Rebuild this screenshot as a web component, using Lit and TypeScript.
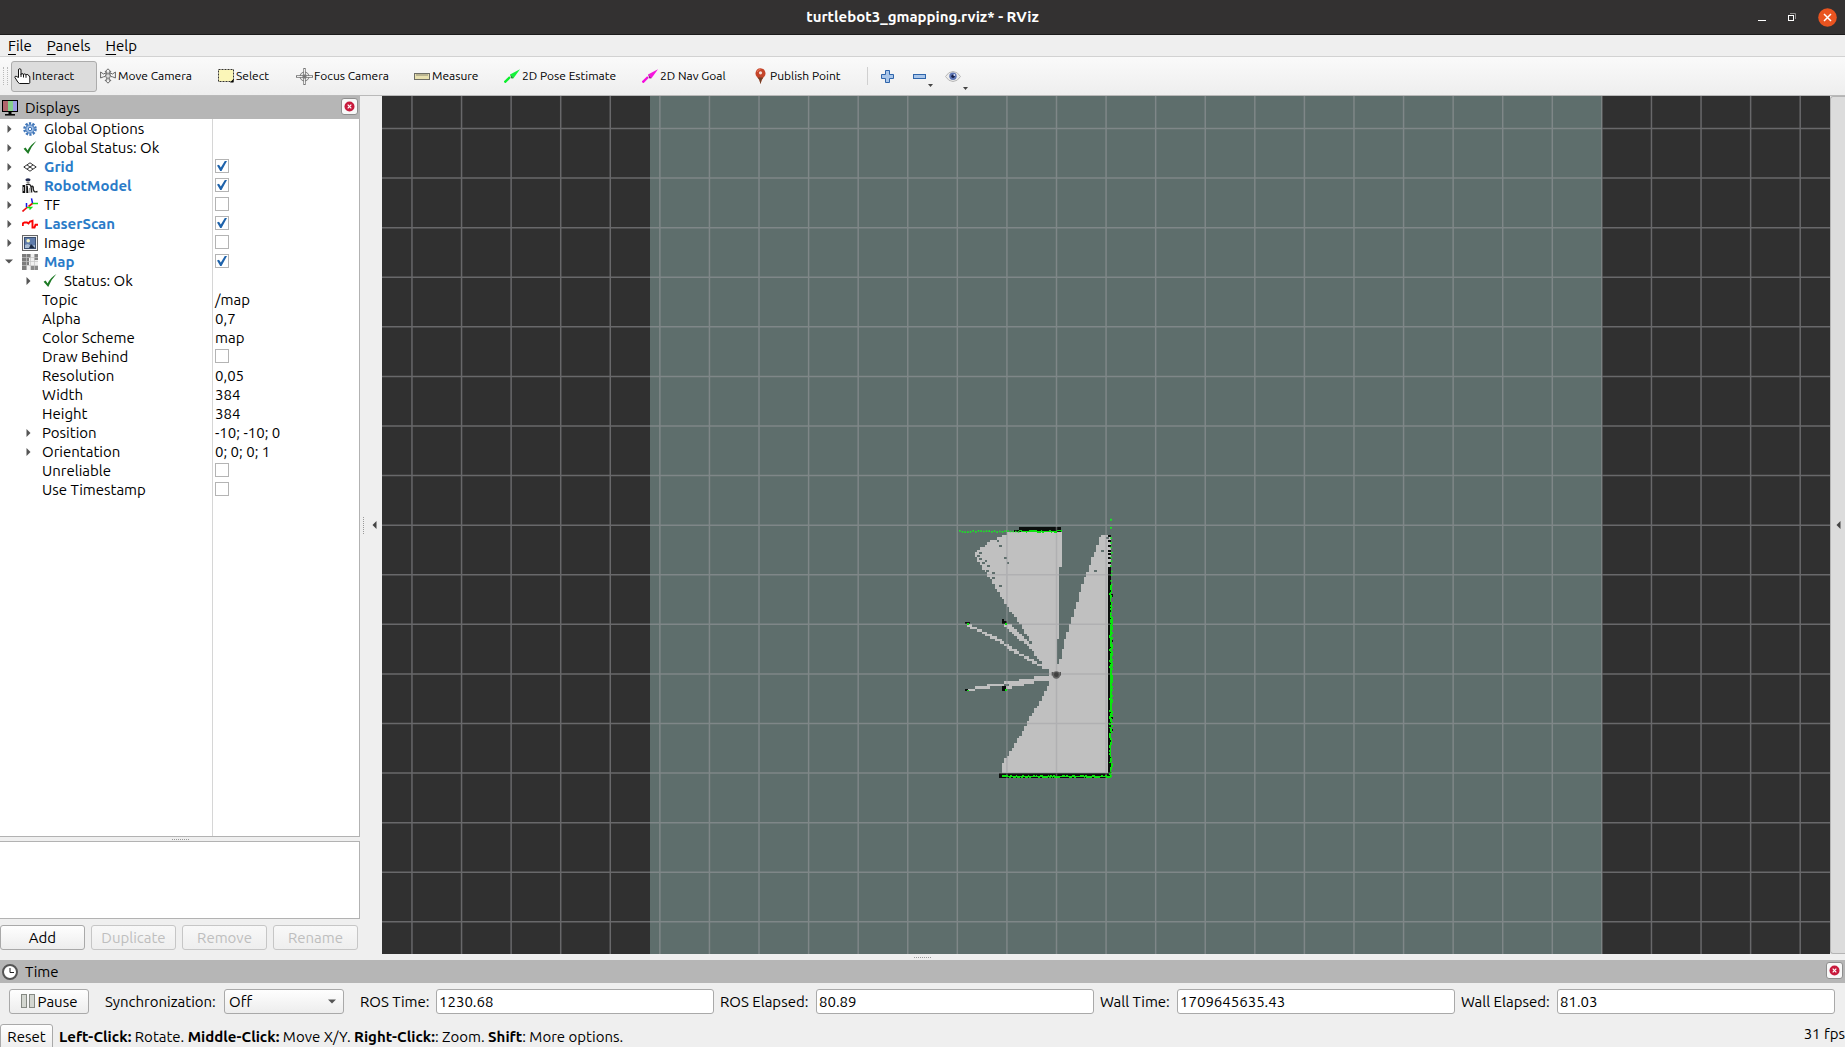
import { LitElement, html, svg, css, nothing, TemplateResult, SVGTemplateResult } from "lit";
import { customElement, property } from "lit/decorators.js";

/* ---------- icons ---------- */

const icon = (w: number, h: number, body: SVGTemplateResult): TemplateResult =>
  html`<svg width=${w} height=${h} viewBox="0 0 ${w} ${h}" fill="none" aria-hidden="true">${body}</svg>`;

const icons: Record<string, TemplateResult> = {
  hand: icon(17, 17, svg`
    <path d="M4.500 9.500V2q0-1.300 1.200-1.300T7 2v4.500q0-1 1.200-1T9.400 7q0-1.200 1.300-1.100T11.900 7.300q0-1 1.300-.9t1.300 1.300q1.300-.1 1.300 1.300v5.500q0 1-.9 1H5.500q-1.700-.8-3-3.500L.8 9.200q0-1.200 1.400-.9z" fill="#fff" stroke="#111"/>
    <path d="M7 6v3M9.500 7v2.500M12 7.300v2.500" stroke="#111"/>`),
  move: icon(16, 16, svg`
    <path d="M8 .8l3 3H9.200v2.500M8 .8l-3 3h1.800v2.500M8 15.200l3-3H9.200V9.700M8 15.200l-3-3h1.800V9.700M.6 4v6M.6 4l2.900 2L6 4.800v1.700L5 8.500l-1.500.3L.6 10M15.400 4v6M15.400 4l-2.900 2L10 4.800v1.700l1 2 1.500.3 2.900 1.200" stroke="#666"/>
    <circle cx="8" cy="8" r="2.300" fill="#ddd" stroke="#777"/>`),
  select: icon(16, 14, svg`
    <rect x=".5" y=".5" width="15" height="12" fill="#fbf6b8" stroke="#333" stroke-dasharray="2 1"/>
    <path d="M15.500 10v3.500H12z" fill="#000"/>`),
  focus: icon(17, 17, svg`
    <circle cx="8.500" cy="8.500" r="4.500" fill="#e4e4e4" stroke="#777"/>
    <circle cx="8.500" cy="8.500" r="2" stroke="#999"/>
    <path d="M8.500 0v17M0 8.500h17" stroke="#777" stroke-width="2.400"/>
    <path d="M8.500 1v15M1 8.500h15" stroke="#eee"/>
    <path d="M8.500 6.500v4M6.500 8.500h4" stroke="#777"/>`),
  ruler: icon(16, 7, svg`
    <rect x=".5" y=".5" width="15" height="6" fill="#e8e1b0" stroke="#6e6e66"/>
    <path d="M3 1v2M5 1v2M7 1v2M9 1v2M11 1v2M13 1v2" stroke="#8a8672"/>`),
  pose: icon(16, 14, svg`
    <path d="M.5 13.500L6 8" stroke="#0bee2c" stroke-width="2.400"/>
    <path d="M16 .3L6 5.500l3.500 3.700z" fill="#14f23a"/><path d="M9.500 9.200L6 5.500l1.500 4z" fill="#087a1a"/>`),
  goal: icon(16, 14, svg`
    <path d="M.5 13.500L6 8" stroke="#f40cdc" stroke-width="2.400"/>
    <path d="M16 .3L6 5.500l3.500 3.700z" fill="#f614de"/><path d="M9.500 9.200L6 5.500l1.500 4z" fill="#7d0870"/>`),
  pin: icon(11, 16, svg`
    <path d="M5.500 16Q4.800 11.500 1.800 8.800.3 7.300.5 5 1.200.4 5.500.2q4.300.2 5 4.800.2 2.300-1.300 3.800Q6.200 11.500 5.500 16z" fill="#c4452a"/>
    <path d="M5.500 16Q4.800 11.500 2.800 9.600h5.400Q6.200 11.500 5.500 16z" fill="#6d4128"/>
    <path d="M2 4q1-2.600 3.500-2.700" stroke="#ee7a60"/><circle cx="5.500" cy="4.800" r="1.600" fill="#f3ded6"/>`),
  plus: icon(13, 13, svg`
    <path d="M4.500.5h4v4h4v4h-4v4h-4v-4h-4v-4h4z" fill="#a9c6ea" stroke="#2f65ab"/>`),
  minus: icon(13, 5, svg`<rect x=".5" y=".5" width="12" height="4" fill="#a9c6ea" stroke="#2f65ab"/>`),
  eye: icon(16, 11, svg`
    <path d="M.5 5.500Q3.500.5 8 .5t7.500 5Q12.500 10.500 8 10.500T.5 5.500z" fill="#ececec" stroke="#b7b7b7"/>
    <circle cx="8" cy="5.300" r="3.700" fill="#5d75b4"/><circle cx="8" cy="5.300" r="1.700" fill="#16204a"/>
    <circle cx="9.300" cy="4" r=".9" fill="#dfe6ff"/>`),
  monitor: icon(16, 16, svg`
    <rect x=".5" y=".5" width="15" height="11" fill="#fff" stroke="#000"/>
    <path d="M1 1h5v10H1z" fill="#b0666c"/><path d="M6 1h5v10H6z" fill="#87d08d"/><path d="M11 1h4v10h-4z" fill="#9d9ce4"/>
    <path d="M8 12v2" stroke="#000" stroke-width="3"/><path d="M3 14.800h10" stroke="#000" stroke-width="1.500"/>`),
  gear: icon(14, 14, svg`
    <circle cx="7" cy="7" r="5.600" stroke="#3f75b8" stroke-width="2.400" stroke-dasharray="2.200 1.320"/>
    <circle cx="7" cy="7" r="4.200" fill="#a3c1e6" stroke="#3f75b8"/><circle cx="7" cy="7" r="1.700" fill="#fff" stroke="#3f75b8"/>`),
  check: icon(14, 14, svg`
    <path d="M.6 7.800l2-1.300 2 3Q7.500 3.500 13.400 0 8.500 5 5.200 12.900z" fill="#1d7a24"/>`),
  grid: icon(14, 10, svg`
    <path d="M7 .8L13.200 5 7 9.200.8 5zM4 2.900l6 4.200M10 2.900L4 7.100" stroke="#333"/>`),
  robot: icon(16, 16, svg`
    <ellipse cx="6" cy="1.800" rx="2.600" ry="1.500" fill="#232a4e"/><path d="M4.500 3.500h3V5h-3z" fill="#888"/>
    <path d="M.5 7h2.700v8H.5zM4.200 8h1.600l.6 7H4.300z" fill="#111"/>
    <path d="M4 7q4-2 5 1.500l.7 6M9.700 8q2 .5 1.500 3 .5 4 4.300 2.500" stroke="#222" stroke-width="1.400"/>
    <path d="M1.500 9v4M7.500 10l.5 5" stroke="#999"/>`),
  axes: icon(16, 14, svg`
    <path d="M.5 13.500L5.500 9M6.500 8.500L11 5" stroke="#f01010" stroke-width="1.600"/>
    <path d="M5 9.500h4.500l-2 2M10.500 5.500H16" stroke="#14e214" stroke-width="1.400"/>
    <path d="M4.500 9V5M10.500 5L9.500.3" stroke="#1616e8" stroke-width="1.500"/>`),
  scan: icon(16, 10, svg`
    <path d="M.8 7V4.500L2.500 3.500H5L6.500 4.500 8 2.500 10.500 1.800V8.500H12.500L13.500 5.800H16" stroke="#fb0505" stroke-width="1.900"/>`),
  image: icon(16, 16, svg`
    <rect x=".5" y=".5" width="15" height="15" fill="#f2f3f4" stroke="#666"/>
    <rect x="2.500" y="2.500" width="11" height="11" fill="#5f7cab" stroke="#3b4f70"/>
    <path d="M3 10l3-1 3 2 4-1v3H3z" fill="#a9bcd2"/><circle cx="6.200" cy="5.800" r="1.800" fill="#f6f3c0"/>
    <path d="M9 9l4 4H7z" fill="#1d2b44"/>`),
  map: icon(16, 16, svg`
    <path d="M0 0h16v16H0z" fill="#f1f1f1"/>
    <path d="M0 0h9v4H7v7H5v5H0z" fill="#7c7c7c"/><path d="M12 0h4v6h-4z" fill="#828282"/><path d="M9 12h7v4H9z" fill="#8a8a8a"/>
    <path d="M0 3.500h16M0 7.500h16M0 11.500h16M4.500 0v16M8.500 0v16M12.500 0v16" stroke="#c4c4c4" stroke-opacity=".7"/>`),
  clock: icon(16, 16, svg`
    <circle cx="8" cy="8" r="7" fill="#fff" stroke="#555" stroke-width="2"/><path d="M8 4v4.500h4" stroke="#222"/>`),
  pause: icon(15, 15, svg`
    <rect x=".5" y=".5" width="5" height="13" fill="#d3d6d0" stroke="#858983"/>
    <rect x="8.500" y=".5" width="5" height="13" fill="#d3d6d0" stroke="#858983"/>`),
  closeDot: icon(11, 11, svg`
    <circle cx="5.500" cy="5.500" r="5" fill="#c8193c"/><path d="M3.700 3.700l3.600 3.600M7.300 3.700L3.700 7.300" stroke="#fff" stroke-width="1.200"/>`),
  right: icon(5, 8, svg`<path d="M.5 0L4.500 4l-4 4z" fill="#555"/>`),
  left: icon(5, 8, svg`<path d="M4.500 0L.5 4l4 4z" fill="#444"/>`),
  down: icon(8, 5, svg`<path d="M0 .5h8l-4 4z" fill="#555"/>`),
  tinyDown: icon(5, 3, svg`<path d="M0 0h5L2.500 3z" fill="#444"/>`),
  minimize: icon(8, 10, svg`<path d="M0 8.500h8" stroke="#fff"/>`),
  restore: icon(8, 8, svg`
    <path d="M2 .5h5.500V6" stroke="#8f8d8c"/><rect x=".5" y="2.500" width="5" height="5" stroke="#fff"/>`),
  closeWin: icon(19, 19, svg`
    <circle cx="9.500" cy="9.500" r="9.300" fill="#e95420"/><path d="M6 6l7 7M13 6l-7 7" stroke="#fff" stroke-width="1.500"/>`),
};

/* ---------- occupancy map geometry ---------- */

type Pt = [number, number];
const CELL = 7.44;

/** Fills a polygon with whole map cells, one run per row. */
function cells(poly: Pt[]): string {
  const ys = poly.map((p) => p[1]);
  let d = "";
  for (let r = Math.floor(Math.min(...ys) / CELL); r * CELL < Math.max(...ys); r++) {
    const y = (r + 0.5) * CELL;
    const xs: number[] = [];
    poly.forEach(([x1, y1], i) => {
      const [x2, y2] = poly[(i + 1) % poly.length];
      if (y1 <= y !== y2 <= y) xs.push(x1 + ((y - y1) * (x2 - x1)) / (y2 - y1));
    });
    xs.sort((a, b) => a - b);
    for (let i = 0; i + 1 < xs.length; i += 2) {
      const a = Math.round(xs[i] / CELL) * CELL;
      const b = Math.round(xs[i + 1] / CELL) * CELL;
      d += `M${a} ${r * CELL}H${b}v${CELL}H${a}z`;
    }
  }
  return d;
}

/** Marks every map cell that a poly-line passes through. */
function ray(points: Pt[]): string {
  const seen = new Set<string>();
  let d = "";
  for (let i = 0; i + 1 < points.length; i++) {
    const [x1, y1] = points[i];
    const [x2, y2] = points[i + 1];
    const n = Math.ceil(Math.abs(x2 - x1) / 3);
    for (let k = 0; k <= n; k++) {
      const c = Math.floor((x1 + ((x2 - x1) * k) / n) / CELL);
      const r = Math.floor((y1 + ((y2 - y1) * k) / n) / CELL);
      const key = `${c},${r}`;
      if (seen.has(key)) continue;
      seen.add(key);
      d += `M${c * CELL} ${r * CELL}h${CELL}v${CELL}h-${CELL}z`;
    }
  }
  return d;
}

const box = (x: number, y: number, w: number, h: number) => `M${x} ${y}h${w}v${h}h-${w}z`;

/** Small repeatable generator for the scatter of the scan points. */
function noise(seed: number): () => number {
  let s = seed;
  return () => (s = (s * 16807) % 2147483647) / 2147483647;
}

const free =
  cells([[105, 128], [128, 110], [150, 92], [172, 84], [190, 74], [210, 66], [363, 66], [363, 170], [357, 170],
    [357, 386], [350, 386], [350, 498], [327, 485], [290, 425], [245, 350], [195, 277], [150, 208], [120, 160], [105, 140]]) +
  cells([[483, 74], [506, 74], [506, 790], [186, 790], [186, 770], [200, 742], [245, 670], [270, 622], [300, 575], [333, 508],
    [327, 508], [327, 484], [350, 490], [350, 462], [357, 462], [372, 400], [395, 330], [416, 262], [440, 190], [470, 110]]) +
  cells([[192, 516], [236, 514], [236, 507], [282, 506], [282, 499], [333, 498], [333, 510], [282, 517], [236, 528], [192, 538]]) +
  ray([[84, 542], [103, 542]]) + ray([[105, 534], [146, 534]]) + ray([[148, 526], [195, 526]]) +
  ray([[82, 344], [120, 360], [150, 378], [192, 400], [215, 418], [255, 440], [290, 460], [312, 471]]) +
  ray([[195, 344], [222, 367], [250, 392], [272, 410], [290, 433], [305, 452], [316, 470]]) +
  ray([[203, 344], [230, 367], [258, 392], [282, 412], [300, 436], [316, 458]]) +
  box(504, 75, 9, 97);

const holes = [[177, 104], [192, 141], [200, 156], [177, 224], [170, 90], [118, 126], [112, 134], [118, 143], [126, 156], [134, 150],
  [141, 164], [138, 180], [156, 186], [156, 202], [483, 119], [462, 180], [192, 522], [200, 522], [498, 82]]
  .map(([x, y]) => box(x, y, 8, 6)).join("");

const walls = [box(237, 51, 126, 12), box(222, 60, 141, 6), box(504, 170, 9, 620), box(177, 789, 336, 14),
  box(75, 336, 15, 6), box(186, 327, 7, 14), box(192, 334, 8, 8), box(75, 537, 8, 6), box(186, 528, 13, 14),
  ...[75, 90, 105, 120, 129, 141, 156].map((y) => box(504, y, 9, 7)),
  ...[253, 390, 455, 620, 656].map((y) => box(513, y, 5, 7))].join("");

const sparseHits = (() => {
  const rnd = noise(37);
  let d = "";
  for (let x = 57; x < 237; x += 8) d += box(x, 60 + Math.round(rnd() * 4), 5, 5);
  for (let y = 80; y < 225; y += 14) d += box(510 + Math.round(rnd() * 3), y + Math.round(rnd() * 6), 5, 5);
  return d + box(510, 26, 6, 6) + box(510, 51, 6, 5);
})();

const hits = (() => {
  const rnd = noise(71);
  let d = "";
  for (let x = 237; x < 366; x += 5) d += box(x, 59 + Math.round(rnd() * 5), 5, 5);
  for (let y = 225; y < 320; y += 5) d += box(507 + Math.round(rnd() * 7), y, 5, 5);
  for (let y = 318; y < 625; y += 3) d += box(508 + Math.round(rnd() * 5), y, 6, 5);
  for (let y = 625; y < 800; y += 5) d += box(507 + Math.round(rnd() * 6), y, 5, 5);
  for (let x = 187; x < 510; x += 4) d += box(x, 795 + Math.round(rnd() * 4), 5, 5);
  return d + box(81, 339, 6, 5) + box(194, 339, 7, 6) + box(80, 539, 6, 5) + box(194, 538, 6, 6);
})();

const gridPath = (() => {
  const step = 49.58;
  let d = "";
  for (let n = -40; n <= 40; n++) {
    d += `M${(1056.5 + n * step).toFixed(2)} -600V1900M-900 ${(673.9 + n * step).toFixed(2)}H3000`;
  }
  return d;
})();

/* ---------- elements ---------- */

const base = css`
  *, *::before, *::after { box-sizing: border-box; }
  svg { display: block; flex: none; }
  button, input, select {
    font: inherit;
    color: inherit;
    margin: 0;
  }
  .push {
    display: flex;
    align-items: center;
    justify-content: center;
    height: 25px;
    padding: 0;
    border: 1px solid #a9a9a9;
    border-radius: 3px;
    background: linear-gradient(#fefefe, #ededed);
  }
  .push:disabled { color: #bebebe; border-color: #c6c6c6; background: linear-gradient(#f8f8f8, #eee); }
`;

@customElement("dock-header")
class DockHeader extends LitElement {
  @property() icon = "";
  @property() label = "";
  static styles = [base, css`
    :host { display: flex; align-items: center; flex: none; height: 23px; padding: 0 2px; gap: 7px; background: #b6b6b6; }
    h2 { flex: 1; margin: 0; font-size: 15px; font-weight: 400; line-height: 20px; }
    button {
      display: flex; align-items: center; justify-content: center; align-self: flex-start;
      width: 17px; height: 17px; margin-top: 2px; padding: 0;
      border: 1px solid #8e8e8e; border-radius: 3px; background: #f8f8f8;
    }
  `];
  render() {
    return html`${icons[this.icon]}<h2>${this.label}</h2>
      <button aria-label="Close ${this.label}">${icons.closeDot}</button>`;
  }
}

interface Row {
  name: string;
  icon?: string;
  value?: string;
  checked?: boolean;
  strong?: boolean;
  open?: boolean;
  leaf?: boolean;
  child?: boolean;
}

const rows: Row[] = [
  { name: "Global Options", icon: "gear" },
  { name: "Global Status: Ok", icon: "check" },
  { name: "Grid", icon: "grid", checked: true, strong: true },
  { name: "RobotModel", icon: "robot", checked: true, strong: true },
  { name: "TF", icon: "axes", checked: false },
  { name: "LaserScan", icon: "scan", checked: true, strong: true },
  { name: "Image", icon: "image", checked: false },
  { name: "Map", icon: "map", checked: true, strong: true, open: true },
  { name: "Status: Ok", icon: "check", child: true },
  { name: "Topic", value: "/map", child: true, leaf: true },
  { name: "Alpha", value: "0,7", child: true, leaf: true },
  { name: "Color Scheme", value: "map", child: true, leaf: true },
  { name: "Draw Behind", checked: false, child: true, leaf: true },
  { name: "Resolution", value: "0,05", child: true, leaf: true },
  { name: "Width", value: "384", child: true, leaf: true },
  { name: "Height", value: "384", child: true, leaf: true },
  { name: "Position", value: "-10; -10; 0", child: true },
  { name: "Orientation", value: "0; 0; 0; 1", child: true },
  { name: "Unreliable", checked: false, child: true, leaf: true },
  { name: "Use Timestamp", checked: false, child: true, leaf: true },
];

@customElement("displays-panel")
class DisplaysPanel extends LitElement {
  static styles = [base, css`
    :host { display: flex; flex-direction: column; min-height: 0; }
    .tree {
      flex: 1; min-height: 0; overflow: hidden;
      border: solid #b2b2b2; border-width: 0 1px 1px 0;
      background: linear-gradient(#d6d6d6, #d6d6d6) 212px 0 / 1px 100% no-repeat #fff;
    }
    table { width: 100%; border-collapse: collapse; table-layout: fixed; }
    .name-col { width: 213px; }
    td, th { height: 19px; padding: 0; font-weight: 400; text-align: left; line-height: 19px; vertical-align: top; }
    .name { display: flex; align-items: center; height: 19px; padding-left: 5px; }
    .child .name { padding-left: 25px; }
    .twist { display: flex; justify-content: center; width: 8px; margin-right: 9px; padding: 0; border: 0; background: none; }
    .child .twist { width: 6px; margin-right: 11px; }
    .pic { display: flex; justify-content: center; width: 16px; margin-right: 6px; }
    .strong label { color: #2a7bc8; font-weight: 700; }
    .value { padding-left: 2px; }
    input {
      display: block; appearance: none; width: 14px; height: 14px; margin-top: 2px;
      border: 1px solid #b4b4b4; background: #fff;
    }
    input:checked::before {
      content: ""; display: block; width: 10px; height: 10px; margin: 1px; background: #1f63ab;
      clip-path: polygon(0 45%, 20% 38%, 38% 65%, 78% 0, 100% 0, 45% 100%, 32% 100%);
    }
    .grip { display: flex; align-items: center; justify-content: center; flex: none; height: 4px; }
    .grip::before { content: ""; width: 17px; border-top: 1px dotted #999; }
    .note { flex: none; height: 78px; border: solid #b2b2b2; border-width: 1px 1px 1px 0; background: #fff; }
    .buttons { display: grid; grid-template-columns: repeat(4, 1fr); gap: 6px; flex: none; padding: 6px 2px 4px 0; }
  `];
  private row(r: Row, i: number) {
    const id = `p${i}`;
    return html`<tr class="${r.child ? "child" : ""} ${r.strong ? "strong" : ""}">
      <th scope="row"><div class="name">
        ${r.leaf
          ? html`<span class="twist"></span>`
          : html`<button class="twist" aria-label="Toggle ${r.name}" aria-expanded=${r.open ? "true" : "false"}>
              ${r.open ? icons.down : icons.right}</button>`}
        ${r.icon ? html`<span class="pic">${icons[r.icon]}</span>` : nothing}
        <label for=${id}>${r.name}</label>
      </div></th>
      <td class="value">${r.checked === undefined
        ? html`<output id=${id}>${r.value ?? ""}</output>`
        : html`<input id=${id} type="checkbox" .checked=${r.checked}>`}</td>
    </tr>`;
  }
  render() {
    return html`
      <dock-header icon="monitor" label="Displays"></dock-header>
      <div class="tree"><table>
        <colgroup><col class="name-col"><col></colgroup>
        <tbody>${rows.map((r, i) => this.row(r, i))}</tbody>
      </table></div>
      <div class="grip"></div>
      <div class="note"></div>
      <div class="buttons">
        <button class="push">Add</button>
        <button class="push" disabled>Duplicate</button>
        <button class="push" disabled>Remove</button>
        <button class="push" disabled>Rename</button>
      </div>`;
  }
}

@customElement("map-view")
class MapView extends LitElement {
  static styles = [base, css`
    :host { display: block; min-width: 0; min-height: 0; overflow: hidden; background: #303030; }
    svg { width: 100%; height: 100%; }
  `];
  render() {
    return html`<svg viewBox="382 96 1448 858" preserveAspectRatio="xMidYMid slice" role="img" aria-label="Map">
      <rect x="650" y="-600" width="952" height="2500" fill="#5e6e6c"/>
      <g transform="translate(940 510) scale(.33333)" shape-rendering="crispEdges">
        <path d=${free} fill="#c0c0c0"/>
        <path d=${holes} fill="#5e6e6c"/>
        <path d=${walls} fill="#0c0f0e"/>
      </g>
      <path d=${gridPath} stroke="#a0a0a4" stroke-opacity=".5" stroke-width="1.500"/>
      <g transform="translate(940 510) scale(.33333)">
        <path d=${sparseHits} fill="#1ee028"/>
        <path d=${hits} fill="#0be40f" shape-rendering="crispEdges"/>
        <path d="M335 486h28v10l-6 6h-16l-6-6z" fill="#8f8f8f"/>
        <path d="M337 486v10M361 486v10" stroke="#4c4c4c" stroke-width="3"/>
        <circle cx="349" cy="495" r="11" fill="#626262"/><circle cx="349" cy="494" r="7" fill="#404040"/>
      </g>
    </svg>`;
  }
}

@customElement("time-panel")
class TimePanel extends LitElement {
  static styles = [base, css`
    :host { display: block; flex: none; }
    .fields {
      display: grid; align-items: center; column-gap: 6px;
      grid-template-columns: 80px 123px 120px 80px 1fr 90px 1fr 71px 1fr 90px 1fr;
      padding: 6px 10px 10px 9px;
    }
    .pause { gap: 2px; }
    label { white-space: nowrap; line-height: 20px; padding-top: 1px; }
    .wide { padding-left: 10px; }
    input {
      width: 100%; min-width: 0; height: 25px; padding: 0 2px; border: 1px solid #a9a9a9; border-radius: 3px; background: #fff;
    }
    .combo { display: grid; align-items: center; }
    .combo > * { grid-area: 1 / 1; }
    .combo svg { justify-self: end; margin-right: 8px; pointer-events: none; }
    select {
      appearance: none; height: 25px; width: 100%; padding: 0 4px; border: 1px solid #a9a9a9; border-radius: 3px;
      background: linear-gradient(#fefefe, #ededed);
    }
  `];
  render() {
    return html`
      <dock-header icon="clock" label="Time"></dock-header>
      <div class="fields">
        <button class="push pause">${icons.pause}Pause</button>
        <label class="wide" for="sync">Synchronization:</label>
        <div class="combo"><select id="sync"><option>Off</option></select>${icons.down}</div>
        <label class="wide" for="ros">ROS Time:</label><input id="ros" value="1230.68">
        <label for="rosel">ROS Elapsed:</label><input id="rosel" value="80.89">
        <label for="wall">Wall Time:</label><input id="wall" value="1709645635.43">
        <label for="wallel">Wall Elapsed:</label><input id="wallel" value="81.03">
      </div>`;
  }
}

const tools: [string, string][] = [
  ["hand", "Interact"], ["move", "Move Camera"], ["select", "Select"], ["focus", "Focus Camera"],
  ["ruler", "Measure"], ["pose", "2D Pose Estimate"], ["goal", "2D Nav Goal"], ["pin", "Publish Point"],
];

@customElement("app-root")
class AppRoot extends LitElement {
  static styles = [base, css`
    :host {
      display: flex; flex-direction: column; height: 100vh; overflow: hidden;
      background: #efefef; color: #000;
      font: 15px/20px "Ubuntu", "Noto Sans", "Open Sans", sans-serif;
    }
    .title {
      display: grid; grid-template-columns: 1fr auto 1fr; align-items: center; flex: none; height: 35px;
      background: #333131; border-bottom: 1px solid #1c1b1b; color: #fff;
    }
    h1 { grid-column: 2; margin: 0; font-size: 15px; font-weight: 700; line-height: 20px; }
    .window { display: flex; align-items: center; justify-content: flex-end; gap: 22px; padding-right: 8px; }
    .window button, .extra button { display: flex; align-items: center; padding: 0; border: 0; background: none; }
    .menu { display: flex; flex: none; gap: 15px; height: 22px; padding: 0 8px; border-bottom: 1px solid #d2d2d2; }
    .menu a { color: inherit; text-decoration: none; line-height: 22px; }
    .menu u { text-decoration-thickness: 1px; text-underline-offset: 3px; }
    .bar {
      display: flex; align-items: center; flex: none; height: 39px; padding-left: 3px;
      background: linear-gradient(#fafafa, #eee); border-bottom: 1px solid #b9b9b9; box-shadow: inset 0 -1px #eee;
    }
    .handle { width: 5px; height: 18px; margin-right: 3px; border: dotted #b9b9b9; border-width: 0 1px; }
    .tools { display: grid; grid-template-columns: 86px 118px 78px 118px 90px 138px 110px 114px; }
    .tool {
      display: flex; align-items: center; gap: 2px; height: 31px; padding: 0 2px; white-space: nowrap;
      border: 1px solid transparent; border-radius: 3px; background: none; font-size: 12px; line-height: 16px;
    }
    .tool.on { background: #dcdcdc; border-color: #acacac; }
    .tool .glyph { display: flex; justify-content: center; width: 16px; }
    .extra { display: flex; align-items: center; gap: 19px; margin-left: 4px; padding-left: 13px; border-left: 1px solid #d0d0d0; height: 18px; }
    .drop { position: relative; }
    .drop .mark { position: absolute; right: -7px; bottom: -8px; }
    .main { display: grid; flex: 1; min-height: 0; grid-template-columns: 360px 22px 1fr 15px; }
    .side { display: flex; align-items: center; padding: 0; border: 0; background: none; }
    .side.start { padding-left: 3px; gap: 8px; }
    .side.start::before { content: ""; height: 17px; border-left: 1px dotted #999; }
    .side.end { justify-content: center; border: 1px solid #b4b4b4; border-right: 0; border-radius: 3px 0 0 3px; background: #dcdcdc; }
    .split { display: flex; align-items: center; justify-content: center; flex: none; height: 6px; }
    .split::before { content: ""; width: 17px; border-top: 1px dotted #999; }
    .status { display: flex; align-items: flex-start; flex: none; height: 23px; overflow: hidden; }
    .status .push { flex: none; width: 53px; height: 26px; margin-right: 6px; }
    .status p { flex: 1; margin: 0; padding-top: 3px; line-height: 20px; }
  `];
  render() {
    return html`
      <header class="title">
        <h1>turtlebot3_gmapping.rviz* - RViz</h1>
        <div class="window">
          <button aria-label="Minimize">${icons.minimize}</button>
          <button aria-label="Restore">${icons.restore}</button>
          <button aria-label="Close">${icons.closeWin}</button>
        </div>
      </header>
      <nav class="menu">
        <a href="#file"><u>F</u>ile</a><a href="#panels"><u>P</u>anels</a><a href="#help"><u>H</u>elp</a>
      </nav>
      <div class="bar">
        <span class="handle"></span>
        <div class="tools">${tools.map(([i, t], n) => html`
          <button class="tool ${n === 0 ? "on" : ""}"><span class="glyph">${icons[i]}</span>${t}</button>`)}
        </div>
        <div class="extra">
          <button aria-label="Add tool">${icons.plus}</button>
          <button class="drop" aria-label="Remove tool">${icons.minus}<span class="mark">${icons.tinyDown}</span></button>
          <button class="drop" aria-label="Visibility">${icons.eye}<span class="mark">${icons.tinyDown}</span></button>
        </div>
      </div>
      <main class="main">
        <displays-panel></displays-panel>
        <button class="side start" aria-label="Hide left dock">${icons.left}</button>
        <map-view></map-view>
        <button class="side end" aria-label="Show right dock">${icons.left}</button>
      </main>
      <div class="split"></div>
      <time-panel></time-panel>
      <footer class="status">
        <button class="push">Reset</button>
        <p><b>Left-Click:</b> Rotate. <b>Middle-Click:</b> Move X/Y. <b>Right-Click:</b>: Zoom. <b>Shift</b>: More options.</p>
        <span>31 fps</span>
      </footer>`;
  }
}
